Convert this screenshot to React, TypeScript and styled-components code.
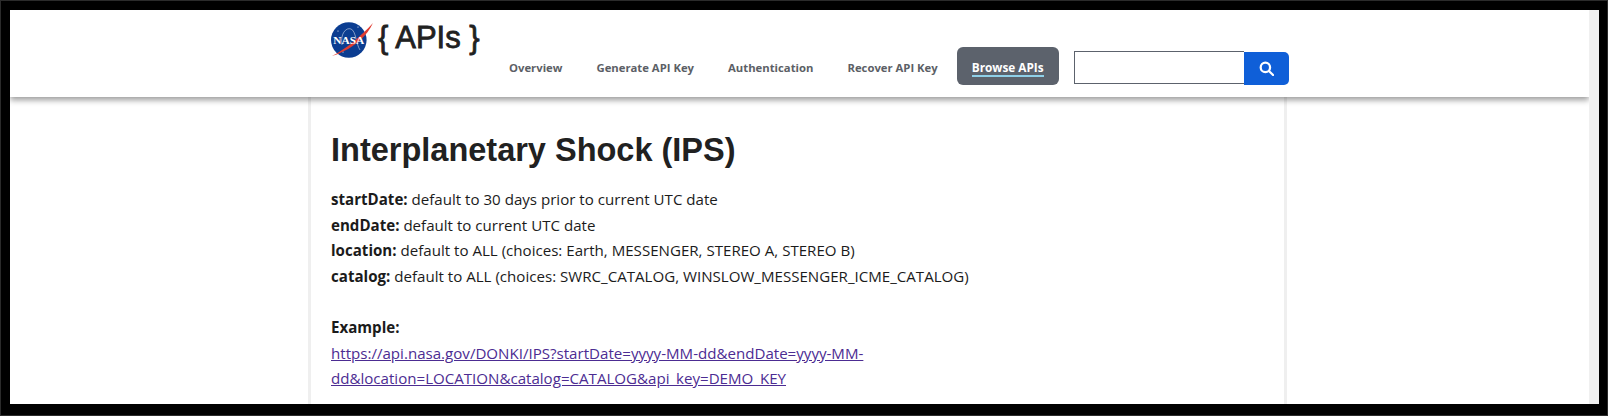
import React from 'react';
import styled, { createGlobalStyle } from 'styled-components';

const GlobalStyle = createGlobalStyle`
  html, body {
    margin: 0;
    padding: 0;
    background: #000;
  }
  * {
    box-sizing: border-box;
  }
`;

const navItems = [
  { label: 'Overview' },
  { label: 'Generate API Key' },
  { label: 'Authentication' },
  { label: 'Recover API Key' },
  { label: 'Browse APIs', active: true },
];

const params = [
  { name: 'startDate:', text: 'default to 30 days prior to current UTC date' },
  { name: 'endDate:', text: 'default to current UTC date' },
  { name: 'location:', text: 'default to ALL (choices: Earth, MESSENGER, STEREO A, STEREO B)' },
  { name: 'catalog:', text: 'default to ALL (choices: SWRC_CATALOG, WINSLOW_MESSENGER_ICME_CATALOG)' },
];

const NasaLogo = () => (
  <svg width="42" height="38" viewBox="0 0 42 38" aria-hidden="true">
    <circle cx="17.8" cy="20" r="17.8" fill="#0b3d91" />
    <circle cx="7" cy="11" r="0.6" fill="#fff" />
    <circle cx="27" cy="7" r="0.6" fill="#fff" />
    <circle cx="12" cy="32" r="0.6" fill="#fff" />
    <path
      d="M11 25 C9 14 15 7 20 9 C25 11 25 24 29 30"
      fill="none"
      stroke="#cfd8ea"
      strokeWidth="0.6"
    />
    <path d="M1 36 C15 29 29 17 42 3 C36 16 24 26 13 31 C9 33 5 35 1 36 Z" fill="#e03c31" />
    <text
      x="17.8"
      y="24"
      textAnchor="middle"
      fontFamily="'Liberation Serif', serif"
      fontWeight="700"
      fontSize="11"
      textLength="31"
      lengthAdjust="spacingAndGlyphs"
      fill="#fff"
    >
      NASA
    </text>
  </svg>
);

const App = () => {
  return (
    <>
      <GlobalStyle />
      <Style.Frame>
        <Style.Page>
          <Style.Header>
            <Style.Brand>
              <NasaLogo />
              <Style.BrandText>{'{ APIs }'}</Style.BrandText>
            </Style.Brand>
            <Style.Nav>
              {navItems.map((item) => (
                <Style.NavItem key={item.label} $active={item.active}>
                  <Style.NavLabel $active={item.active}>{item.label}</Style.NavLabel>
                </Style.NavItem>
              ))}
            </Style.Nav>
            <Style.Search>
              <Style.SearchInput />
              <Style.SearchButton aria-label="Search">
                <svg width="15" height="15" viewBox="0 0 16 16" fill="none" stroke="#fff" strokeWidth="2.4">
                  <circle cx="6.8" cy="6.8" r="5" />
                  <path d="M10.6 10.6 L15 15" strokeLinecap="round" />
                </svg>
              </Style.SearchButton>
            </Style.Search>
          </Style.Header>
          <Style.Content>
            <Style.Title>Interplanetary Shock (IPS)</Style.Title>
            <Style.Body>
              {params.map((param) => (
                <Style.Line key={param.name}>
                  <strong>{param.name}</strong> {param.text}
                </Style.Line>
              ))}
              <Style.Line>&nbsp;</Style.Line>
              <Style.Line>
                <strong>Example:</strong>
              </Style.Line>
              <Style.Link href="#">
                https://api.nasa.gov/DONKI/IPS?startDate=yyyy-MM-dd&amp;endDate=yyyy-MM-
                <br />
                dd&amp;location=LOCATION&amp;catalog=CATALOG&amp;api_key=DEMO_KEY
              </Style.Link>
            </Style.Body>
          </Style.Content>
        </Style.Page>
        <Style.Scrollbar />
      </Style.Frame>
    </>
  );
};

export default App;

const Style = {
  Frame: styled.div`
    width: 1608px;
    height: 416px;
    padding: 9px 8px 11px 9px;
    border: 1px solid #2b2b2b;
    background: #000;
    display: flex;
    overflow: hidden;
  `,
  Page: styled.div`
    flex: 1;
    min-width: 0;
    background: #fff;
    overflow: hidden;
  `,
  Scrollbar: styled.div`
    width: 10px;
    background: #f0f0f0;
  `,
  Header: styled.header`
    height: 87px;
    padding: 0 0 0 321px;
    background: #fff;
    display: flex;
    align-items: flex-start;
    box-shadow: 0 3px 6px rgba(0, 0, 0, 0.4);
    position: relative;
  `,
  Brand: styled.div`
    width: 161px;
    padding-top: 10px;
    display: flex;
    align-items: flex-start;
    gap: 5px;
  `,
  BrandText: styled.span`
    margin-top: 1px;
    font-family: 'Liberation Sans', sans-serif;
    font-size: 31px;
    line-height: 34px;
    font-weight: 400;
    -webkit-text-stroke: 0.8px #212121;
    color: #212121;
  `,
  Nav: styled.nav`
    margin-top: 37px;
    display: flex;
    align-items: center;
  `,
  NavItem: styled.div<{ $active?: boolean }>`
    height: 38px;
    margin-left: ${({ $active }) => ($active ? '2px' : '0')};
    padding: 3px ${({ $active }) => ($active ? '15px' : '17px')} 0;
    display: flex;
    align-items: center;
    border-radius: 6px;
    background: ${({ $active }) => ($active ? '#5c626c' : 'transparent')};
  `,
  NavLabel: styled.span<{ $active?: boolean }>`
    font-family: 'Open Sans', sans-serif;
    font-size: ${({ $active }) => ($active ? '11.8px' : '11.3px')};
    font-weight: 700;
    line-height: 16px;
    color: ${({ $active }) => ($active ? '#fff' : '#5c5f66')};
    border-bottom: ${({ $active }) => ($active ? '2px solid #8fd0e8' : '0')};
  `,
  Search: styled.form`
    margin: 41px 0 0 15px;
    display: flex;
  `,
  SearchInput: styled.input`
    width: 170px;
    height: 33px;
    border: 1px solid #5c626c;
    border-right: 0;
    background: #fff;
    border-radius: 0;
    padding: 0;
  `,
  SearchButton: styled.button`
    width: 45px;
    height: 33px;
    margin-top: 1px;
    border: 0;
    padding: 0;
    background: #0f5fd8;
    border-radius: 0 5px 5px 0;
    display: flex;
    align-items: center;
    justify-content: center;
  `,
  Content: styled.main`
    width: 979px;
    height: 310px;
    margin-left: 298px;
    padding: 31px 20px 0 20px;
    border-left: 3px solid #efefef;
    border-right: 3px solid #efefef;
  `,
  Title: styled.h1`
    margin: 0 0 15px;
    font-family: 'Liberation Sans', sans-serif;
    font-size: 32.5px;
    line-height: 44px;
    font-weight: 700;
    color: #212121;
  `,
  Body: styled.div`
    font-family: 'Open Sans', sans-serif;
    font-size: 15.1px;
    line-height: 25.6px;
    color: #1b1b1b;
  `,
  Line: styled.div``,
  Link: styled.a`
    color: #4c2c92;
    text-decoration: underline;
  `,
};
